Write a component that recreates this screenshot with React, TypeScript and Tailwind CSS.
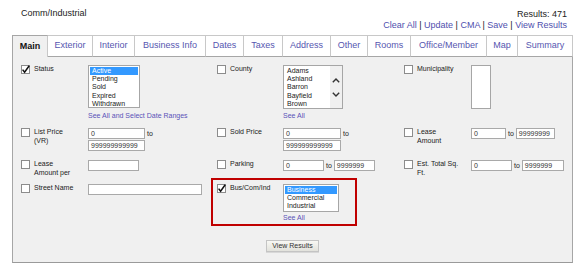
import type { ReactNode } from 'react';

const tabs = [
  { name: 'Main', w: 'w-[36px]' },
  { name: 'Exterior', w: 'w-[45px]' },
  { name: 'Interior', w: 'w-[42px]' },
  { name: 'Business Info', w: 'w-[71px]' },
  { name: 'Dates', w: 'w-[38px]' },
  { name: 'Taxes', w: 'w-[39px]' },
  { name: 'Address', w: 'w-[48px]' },
  { name: 'Other', w: 'w-[37px]' },
  { name: 'Rooms', w: 'w-[43px]' },
  { name: 'Office/Member', w: 'w-[76px]' },
  { name: 'Map', w: 'w-[31px]' },
  { name: 'Summary', w: 'w-[55px]' },
];

function Check({ checked }: { checked?: boolean }) {
  return (
    <span className="relative block w-[9px] h-[9px] shrink-0 border border-[#8c8c8c] bg-white">
      {checked && (
        <svg viewBox="0 0 9 9" className="absolute -left-[1px] -top-[1px] w-[9px] h-[9px] overflow-visible">
          <path d="M1.6 4.6 L3.6 7.2 L8.2 0.8" fill="none" stroke="#111" strokeWidth="1.5" />
        </svg>
      )}
    </span>
  );
}

function Field({ label, checked, labelW = 'w-[54px]', children }: { label: ReactNode; checked?: boolean; labelW?: string; children: ReactNode }) {
  return (
    <div className="flex items-start">
      <Check checked={checked} />
      <div className={`ml-[4px] ${labelW} shrink-0 text-[7px] leading-[8.5px] text-[#222]`}>{label}</div>
      {children}
    </div>
  );
}

function Box({ w, value }: { w: string; value?: string }) {
  return (
    <div className={`${w} h-[11px] border border-[#a9a9a9] bg-white pl-[2px] text-[7px] leading-[9px] text-[#333]`}>
      {value}
    </div>
  );
}

function ListBox({ items, w, h, selected, scroll }: { items: string[]; w: string; h: string; selected?: number; scroll?: boolean }) {
  return (
    <div className={`${w} ${h} flex border border-[#a6a6a6] bg-white`}>
      <div className="flex-1 p-[1px]">
        {items.map((it, i) => (
          <div
            key={it}
            className={`pl-[2px] text-[7px] leading-[8.2px] ${i === selected ? 'bg-[#3399ff] text-white' : 'text-[#222]'}`}
          >
            {it}
          </div>
        ))}
      </div>
      {scroll && (
        <div className="w-[12px] bg-[#f0f0f0] flex flex-col items-center justify-center gap-[9px]">
          <svg viewBox="0 0 8 5" className="w-[8px] h-[5px]">
            <path d="M0.8 4.2 L4 1 L7.2 4.2" fill="none" stroke="#333" strokeWidth="1.4" />
          </svg>
          <svg viewBox="0 0 8 5" className="w-[8px] h-[5px]">
            <path d="M0.8 0.8 L4 4 L7.2 0.8" fill="none" stroke="#333" strokeWidth="1.4" />
          </svg>
        </div>
      )}
    </div>
  );
}

function SeeAll({ text = 'See All', mt }: { text?: string; mt: string }) {
  return <div className={`${mt} text-[7px] leading-[8px] text-[#5a52b8]`}>{text}</div>;
}

function To() {
  return <span className="px-[2px] text-[7px] leading-[11px] text-[#222]">to</span>;
}

export default function App() {
  return (
    <div className="w-[584px] h-[273px] bg-white font-['Liberation_Sans',Arial,sans-serif] overflow-hidden">
      <div className="flex items-start justify-between pl-[21px] pr-[17px] pt-[9px]">
        <div className="-mt-[1px] text-[9px] leading-[11px] text-[#222]">Comm/Industrial</div>
        <div className="flex flex-col items-end text-[9px] leading-[11px]">
          <div className="text-[#222]">Results: 471</div>
          <div className="text-[#222]">
            <span className="text-[#4f4fae]">Clear All</span> | <span className="text-[#4f4fae]">Update</span> |{' '}
            <span className="text-[#4f4fae]">CMA</span> | <span className="text-[#4f4fae]">Save</span> |{' '}
            <span className="text-[#4f4fae]">View Results</span>
          </div>
        </div>
      </div>

      <div className="ml-[12px] mt-[4px] flex w-[561px]">
        {tabs.map((t, i) => (
          <div
            key={t.name}
            className={`${t.w} h-[22px] flex items-center justify-center border-t border-r border-[#c8c8c8] text-[9px] ${
              i === 0
                ? 'border-l border-l-[#a6a6a6] border-t-[#a6a6a6] bg-[#f0f0f0] font-bold text-[#111]'
                : 'border-b border-b-[#a6a6a6] bg-white text-[#5656b0]'
            }`}
          >
            {t.name}
          </div>
        ))}
      </div>

      <div className="ml-[12px] w-[561px] border-x border-b border-[#a6a6a6] border-b-[#9a9a9a] bg-[#f0f0f0] pl-[8px] pt-[8px] pb-[10px]">
        <div className="grid grid-cols-[196px_187px_1fr] h-[63px]">
          <Field label="Status" checked>
            <div>
              <ListBox items={['Active', 'Pending', 'Sold', 'Expired', 'Withdrawn']} w="w-[52px]" h="h-[43px]" selected={0} />
              <SeeAll text="See All and Select Date Ranges" mt="mt-[4px]" />
            </div>
          </Field>
          <Field label="County" labelW="w-[53px]">
            <div>
              <ListBox items={['Adams', 'Ashland', 'Barron', 'Bayfield', 'Brown']} w="w-[60px]" h="h-[44px]" scroll />
              <SeeAll mt="mt-[3px]" />
            </div>
          </Field>
          <Field label="Municipality">
            <div className="w-[20px] h-[44px] border border-[#a6a6a6] bg-white" />
          </Field>
        </div>

        <div className="grid grid-cols-[196px_187px_1fr] h-[32px]">
          <Field label={<>List Price<br />(VR)</>}>
            <div className="flex flex-col gap-[1px]">
              <div className="flex">
                <Box w="w-[57px]" value="0" />
                <To />
              </div>
              <Box w="w-[57px]" value="999999999999" />
            </div>
          </Field>
          <Field label="Sold Price" labelW="w-[53px]">
            <div className="flex flex-col gap-[1px]">
              <div className="flex">
                <Box w="w-[58px]" value="0" />
                <To />
              </div>
              <Box w="w-[58px]" value="999999999999" />
            </div>
          </Field>
          <Field label={<>Lease<br />Amount</>}>
            <div className="flex">
              <Box w="w-[35px]" value="0" />
              <To />
              <Box w="w-[39px]" value="99999999" />
            </div>
          </Field>
        </div>

        <div className="grid grid-cols-[196px_187px_1fr] h-[24px]">
          <Field label={<>Lease<br />Amount per</>}>
            <Box w="w-[51px]" />
          </Field>
          <Field label="Parking" labelW="w-[53px]">
            <div className="flex">
              <Box w="w-[41px]" value="0" />
              <To />
              <Box w="w-[41px]" value="9999999" />
            </div>
          </Field>
          <Field label={<>Est. Total Sq.<br />Ft.</>}>
            <div className="flex">
              <Box w="w-[41px]" value="0" />
              <To />
              <Box w="w-[42px]" value="9999999" />
            </div>
          </Field>
        </div>

        <div className="grid grid-cols-[196px_187px_1fr] h-[42px]">
          <Field label="Street Name">
            <Box w="w-[114px]" />
          </Field>
          <div className="relative">
            <div className="absolute -left-[6px] -top-[6px] w-[146px] h-[48px] border-2 border-[#c00000]" />
            <Field label="Bus/Com/Ind" checked labelW="w-[53px]">
              <div>
                <ListBox items={['Business', 'Commercial', 'Industrial']} w="w-[56px]" h="h-[28px]" selected={0} />
                <SeeAll mt="mt-[2px]" />
              </div>
            </Field>
          </div>
          <div />
        </div>

        <div className="mt-[14px] flex justify-center pr-[8px]">
          <div className="w-[53px] h-[12px] flex items-center justify-center border border-[#c4c4c4] bg-gradient-to-b from-[#f8f8f4] to-[#e2e2dc] text-[7px] text-[#333] shadow-[0_1px_0_#d8d8d8]">
            View Results
          </div>
        </div>
      </div>
    </div>
  );
}
